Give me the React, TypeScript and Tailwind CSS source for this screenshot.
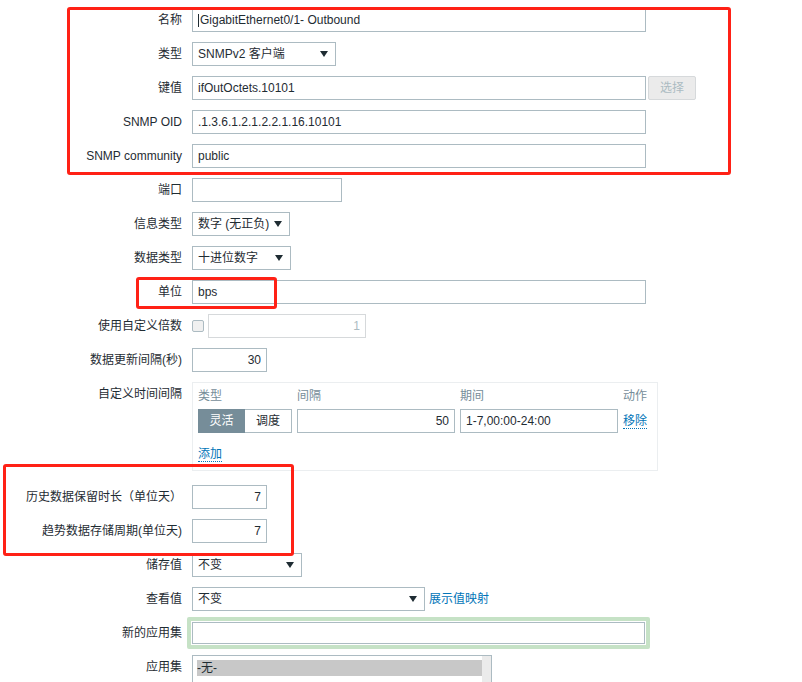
import React from 'react';

const font = { fontFamily: '"Liberation Sans", Arial, "Noto Sans CJK SC", sans-serif' };

const inputCls =
  'h-[24px] box-border border border-[#acbbc2] bg-white px-[5px] text-[12px] text-[#1f2c33] outline-none';

const Arrow: React.FC = () => (
  <svg width="8" height="6" viewBox="0 0 8 6" className="shrink-0">
    <path d="M0 0 H8 L4 6 Z" fill="#1f2c33" />
  </svg>
);

const Select: React.FC<{ w: string; value: string }> = ({ w, value }) => (
  <div className={`${w} ${inputCls} flex items-center justify-between pr-[7px]`}>
    <span className="leading-none">{value}</span>
    <Arrow />
  </div>
);

const Row: React.FC<{ label: string; children: React.ReactNode }> = ({ label, children }) => (
  <div className="flex items-start">
    <div className="w-[182px] mr-[10px] text-right text-[12px] leading-[24px] text-[#1f2c33] whitespace-nowrap">
      {label}
    </div>
    <div className="flex items-center">{children}</div>
  </div>
);

export default function App() {
  return (
    <div className="relative w-[802px] h-[682px] overflow-hidden bg-white" style={font}>
      <div className="flex flex-col gap-[10px] pt-[8px]">
        <Row label="名称">
          <div className={`w-[454px] ${inputCls} border-[#1565a0] flex items-center`}>
            <span className="w-px h-[13px] bg-[#1f2c33] mr-px"></span>
            <span>GigabitEthernet0/1- Outbound</span>
          </div>
        </Row>
        <Row label="类型">
          <Select w="w-[144px]" value="SNMPv2 客户端" />
        </Row>
        <Row label="键值">
          <input readOnly defaultValue="ifOutOctets.10101" className={`w-[454px] ${inputCls}`} />
          <button className="ml-[2px] w-[48px] h-[24px] box-border border border-[#d6d9db] rounded-[2px] bg-[#ebebeb] text-[12px] text-[#acbbc2]">
            选择
          </button>
        </Row>
        <Row label="SNMP OID">
          <input readOnly defaultValue=".1.3.6.1.2.1.2.2.1.16.10101" className={`w-[454px] ${inputCls}`} />
        </Row>
        <Row label="SNMP community">
          <input readOnly defaultValue="public" className={`w-[454px] ${inputCls}`} />
        </Row>
        <Row label="端口">
          <input readOnly defaultValue="" className={`w-[150px] ${inputCls}`} />
        </Row>
        <Row label="信息类型">
          <Select w="w-[98px]" value="数字 (无正负)" />
        </Row>
        <Row label="数据类型">
          <Select w="w-[99px]" value="十进位数字" />
        </Row>
        <Row label="单位">
          <input readOnly defaultValue="bps" className={`w-[454px] ${inputCls}`} />
        </Row>
        <Row label="使用自定义倍数">
          <span className="w-[12px] h-[12px] box-border border border-[#acbbc2] rounded-[2px] bg-[#f0f0f0]"></span>
          <input
            readOnly
            defaultValue="1"
            className={`ml-[4px] w-[158px] ${inputCls} border-[#d6d9db] bg-[#ebebeb] text-right text-[#acbbc2]`}
          />
        </Row>
        <Row label="数据更新间隔(秒)">
          <input readOnly defaultValue="30" className={`w-[75px] ${inputCls} text-right`} />
        </Row>
        <Row label="自定义时间间隔">
          <div className="w-[466px] h-[89px] box-border border border-[#ebeef0] px-[5px] pt-[6px] text-[12px]">
            <div className="flex h-[14px] leading-[14px] text-[#768d99]">
              <span className="w-[99px]">类型</span>
              <span className="w-[163px]">间隔</span>
              <span className="w-[163px]">期间</span>
              <span>动作</span>
            </div>
            <div className="flex items-center mt-[6px]">
              <div className="flex w-[95px]">
                <span className="w-[47px] h-[24px] flex items-center justify-center bg-[#768d99] text-white">灵活</span>
                <span className="w-[47px] h-[24px] box-border border border-l-0 border-[#acbbc2] flex items-center justify-center text-[#1f2c33]">
                  调度
                </span>
              </div>
              <input readOnly defaultValue="50" className={`ml-[4px] w-[158px] ${inputCls} text-right`} />
              <input readOnly defaultValue="1-7,00:00-24:00" className={`ml-[5px] w-[158px] ${inputCls}`} />
              <span className="ml-[5px] text-[#0275b8] border-b border-dotted border-[#0275b8] leading-[14px]">移除</span>
            </div>
            <div className="mt-[12px]">
              <span className="text-[#0275b8] border-b border-dotted border-[#0275b8] leading-[14px] inline-block">添加</span>
            </div>
          </div>
        </Row>
        <div className="mt-[4px]">
          <Row label="历史数据保留时长（单位天）">
            <input readOnly defaultValue="7" className={`w-[75px] ${inputCls} text-right`} />
          </Row>
        </div>
        <Row label="趋势数据存储周期(单位天)">
          <input readOnly defaultValue="7" className={`w-[75px] ${inputCls} text-right`} />
        </Row>
        <Row label="储存值">
          <Select w="w-[110px]" value="不变" />
        </Row>
        <Row label="查看值">
          <Select w="w-[233px]" value="不变" />
          <span className="ml-[4px] text-[12px] text-[#0275b8]">展示值映射</span>
        </Row>
        <div className="flex items-start -mt-[4px]">
          <div className="w-[182px] mr-[5px] pt-[4px] text-right text-[12px] leading-[24px] text-[#1f2c33]">新的应用集</div>
          <div className="w-[463px] h-[32px] box-border border-[4px] border-[#c6e2c6] rounded-[2px] p-px">
            <div className="w-full h-[22px] box-border border border-[#acbbc2] bg-white"></div>
          </div>
        </div>
        <div className="-mt-[4px]">
          <Row label="应用集">
            <div className="w-[300px] h-[40px] box-border border border-[#acbbc2] flex">
              <div className="flex-1 pl-[4px] pt-[4px]">
                <div className="h-[16px] bg-[#c8c8c8] text-[12px] leading-[16px] text-[#1f2c33]">-无-</div>
              </div>
              <div className="w-[9px] bg-[#ebebeb]"></div>
            </div>
          </Row>
        </div>
      </div>

      {/* annotation boxes */}
      <div className="absolute left-[67px] top-[7px] w-[664px] h-[168px] border-[3px] border-[#ff2116] rounded-[3px] pointer-events-none"></div>
      <div className="absolute left-[136px] top-[277px] w-[141px] h-[32px] border-[3px] border-[#ff2116] rounded-[3px] pointer-events-none"></div>
      <div className="absolute left-[3px] top-[464px] w-[291px] h-[92px] border-[3px] border-[#ff2116] rounded-[3px] pointer-events-none"></div>
    </div>
  );
}
